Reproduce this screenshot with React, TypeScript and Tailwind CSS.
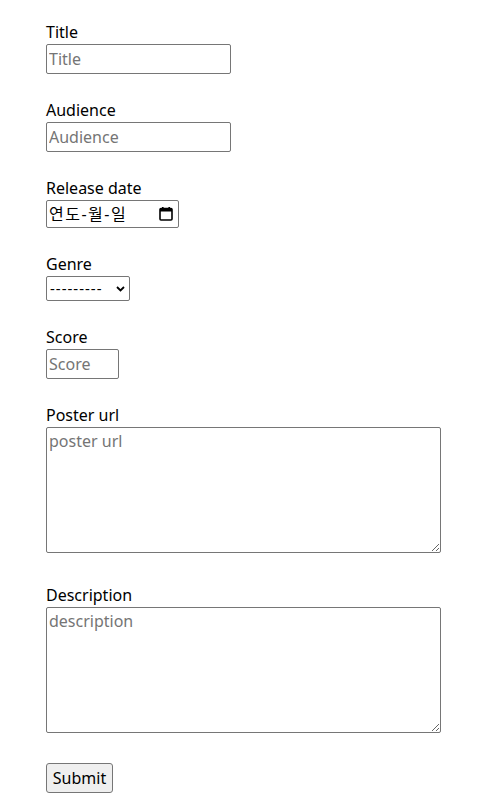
import { useState } from "react";

const font = { fontFamily: '"Noto Sans", "Noto Sans CJK KR", sans-serif' };

function Label({ children }: { children: React.ReactNode }) {
  return <label className="block h-6 text-[16px] leading-6 text-black">{children}</label>;
}

const inputCls =
  "block h-[30px] rounded-[2px] border border-[#767676] bg-white px-[2px] text-[16px] text-black placeholder:text-[#757575] outline-none";

export default function App() {
  const [genre] = useState("---------");

  return (
    <div className="min-h-screen bg-white pl-[46px] pt-5" style={font}>
      <form className="flex flex-col items-start" onSubmit={(e) => e.preventDefault()}>
        <div>
          <Label>Title</Label>
          <input className={`${inputCls} w-[185px]`} placeholder="Title" />
        </div>

        <div className="mt-6">
          <Label>Audience</Label>
          <input className={`${inputCls} w-[185px]`} placeholder="Audience" />
        </div>

        <div className="mt-6">
          <Label>Release date</Label>
          <div className="flex h-[28px] w-[133px] items-center justify-between rounded-[2px] border border-[#767676] pl-[2px] pr-[5px] text-[16px] text-black">
            <span className="tracking-[1.5px]">연도-월-일</span>
            <svg width="14" height="14" viewBox="0 0 14 14">
              <rect x="1" y="1.5" width="12" height="11.5" rx="1" fill="none" stroke="#000" strokeWidth="1.6" />
              <rect x="1" y="1.5" width="12" height="3" fill="#000" />
              <rect x="3" y="0" width="1.6" height="3" fill="#000" />
              <rect x="9.4" y="0" width="1.6" height="3" fill="#000" />
            </svg>
          </div>
        </div>

        <div className="mt-6">
          <Label>Genre</Label>
          <div className="flex h-[25px] w-[84px] items-center justify-between rounded-[2px] border border-[#767676] pl-[3px] pr-[4px] text-[15px] leading-none text-black">
            <span className="tracking-[1px]">{genre}</span>
            <svg width="9" height="6" viewBox="0 0 9 6">
              <path d="M1 1l3.5 3.5L8 1" fill="none" stroke="#000" strokeWidth="1.8" />
            </svg>
          </div>
        </div>

        <div className="mt-6">
          <Label>Score</Label>
          <input className={`${inputCls} w-[73px]`} placeholder="Score" />
        </div>

        <div className="mt-6">
          <Label>Poster url</Label>
          <textarea
            className="block h-[126px] w-[395px] rounded-[2px] border border-[#767676] px-[2px] py-[1px] text-[16px] text-black placeholder:text-[#757575] outline-none"
            placeholder="poster url"
          />
        </div>

        <div className="mt-[30px]">
          <Label>Description</Label>
          <textarea
            className="block h-[126px] w-[395px] rounded-[2px] border border-[#767676] px-[2px] py-[1px] text-[16px] text-black placeholder:text-[#757575] outline-none"
            placeholder="description"
          />
        </div>

        <button
          type="submit"
          className="mt-[30px] h-[30px] w-[67px] rounded-[3px] border border-[#767676] bg-[#efefef] text-[16px] text-black"
        >
          Submit
        </button>
      </form>
    </div>
  );
}
